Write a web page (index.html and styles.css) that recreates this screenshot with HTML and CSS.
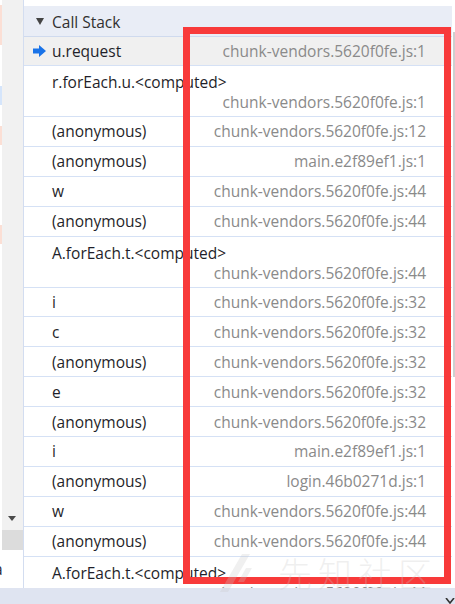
FILE: index.html
```html
<!DOCTYPE html>
<html>
<head>
<meta charset="utf-8">
<link rel="stylesheet" href="styles.css">
</head>
<body>
<div class="screen">
  <div class="main">
    <div class="edge">
      <span class="mark pink m1"></span>
      <span class="mark blue m2"></span>
      <span class="mark pink m3"></span>
      <span class="mark pink m4"></span>
    </div>
    <div class="sidebar">
      <div class="side-fill"><span class="side-arrow"></span></div>
      <div class="side-block"></div>
      <div class="side-white"><span class="cut">a</span></div>
    </div>
    <div class="panel">
      <div class="panel-top"></div>
      <div class="header"><span class="tri"></span><span class="title">Call Stack</span></div>
      <div class="row selected">
        <span class="fn"><svg class="cur" width="13" height="12" viewBox="0 0 13 12"><path d="M0 3.5h6V0l7 6-7 6V8.5H0z" fill="#1a73e8"/></svg>u.request</span>
        <span class="file">chunk-vendors.5620f0fe.js:1</span>
      </div>
      <div class="row two">
        <span class="fn">r.forEach.u.&lt;computed&gt;</span>
        <span class="file">chunk-vendors.5620f0fe.js:1</span>
      </div>
      <div class="row"><span class="fn">(anonymous)</span><span class="file">chunk-vendors.5620f0fe.js:12</span></div>
      <div class="row"><span class="fn">(anonymous)</span><span class="file">main.e2f89ef1.js:1</span></div>
      <div class="row"><span class="fn">w</span><span class="file">chunk-vendors.5620f0fe.js:44</span></div>
      <div class="row"><span class="fn">(anonymous)</span><span class="file">chunk-vendors.5620f0fe.js:44</span></div>
      <div class="row two">
        <span class="fn">A.forEach.t.&lt;computed&gt;</span>
        <span class="file">chunk-vendors.5620f0fe.js:44</span>
      </div>
      <div class="row"><span class="fn">i</span><span class="file">chunk-vendors.5620f0fe.js:32</span></div>
      <div class="row"><span class="fn">c</span><span class="file">chunk-vendors.5620f0fe.js:32</span></div>
      <div class="row"><span class="fn">(anonymous)</span><span class="file">chunk-vendors.5620f0fe.js:32</span></div>
      <div class="row"><span class="fn">e</span><span class="file">chunk-vendors.5620f0fe.js:32</span></div>
      <div class="row"><span class="fn">(anonymous)</span><span class="file">chunk-vendors.5620f0fe.js:32</span></div>
      <div class="row"><span class="fn">i</span><span class="file">main.e2f89ef1.js:1</span></div>
      <div class="row"><span class="fn">(anonymous)</span><span class="file">login.46b0271d.js:1</span></div>
      <div class="row"><span class="fn">w</span><span class="file">chunk-vendors.5620f0fe.js:44</span></div>
      <div class="row"><span class="fn">(anonymous)</span><span class="file">chunk-vendors.5620f0fe.js:44</span></div>
      <div class="row two">
        <span class="fn">A.forEach.t.&lt;computed&gt;</span>
        <span class="file">chunk-vendors.5620f0fe.js:44</span>
      </div>
    </div>
    <div class="scrollbar"><div class="thumb"></div></div>
  </div>
  <div class="bottombar">
    <svg class="chev" width="12" height="6" viewBox="0 0 12 6"><path d="M2 0l4 5 4-5" stroke="#333" stroke-width="1.6" fill="none"/></svg>
  </div>
  <div class="highlight"></div>
  <div class="watermark">
    <svg width="40" height="38" viewBox="0 0 40 38"><path d="M22 0h8L8 38H0z M26 14h6l-8 14h-6z" fill="currentColor"/></svg>
    <span class="wm-text">先知社区</span>
  </div>
</div>
</body>
</html>
```
FILE: styles.css
```css
html, body {
  margin: 0;
  padding: 0;
  background: #ffffff;
}
.screen {
  position: relative;
  width: 455px;
  height: 604px;
  overflow: hidden;
  font-family: "Open Sans", "Noto Sans", sans-serif;
  font-size: 15.5px;
}
.main {
  display: flex;
  height: 588px;
}
.edge {
  width: 2px;
  display: flex;
  flex-direction: column;
  background: #ffffff;
}
.mark { display: block; height: 19px; }
.pink { background: #fbdfd5; }
.blue { background: #d5e5fb; }
.m1 { margin-top: 5px; height: 40px; }
.m2 { margin-top: 41px; }
.m3 { margin-top: 21px; }
.m4 { margin-top: 80px; }
.sidebar {
  width: 21px;
  border-right: 1px solid #d3ddf0;
  display: flex;
  flex-direction: column;
}
.side-fill {
  flex: 1;
  background: #f1f1f1;
  display: flex;
  align-items: flex-end;
  padding-left: 6px;
  padding-bottom: 9px;
}
.side-arrow {
  width: 0;
  height: 0;
  border-left: 4.5px solid transparent;
  border-right: 4.5px solid transparent;
  border-top: 5px solid #4a4a4a;
}
.side-block {
  height: 20px;
  background: #dcdcdc;
}
.side-white {
  height: 38px;
  background: #ffffff;
  display: flex;
  align-items: center;
  overflow: visible;
}
.cut {
  margin-left: -8px;
  color: #2a2a3a;
  line-height: 20px;
}
.panel {
  flex: 1;
  display: flex;
  flex-direction: column;
  overflow: hidden;
  min-width: 0;
}
.panel-top { height: 6px; flex: none; }
.header {
  flex: none;
  height: 30px;
  border-bottom: 1px solid #cfdaee;
  background: #e9edf6;
  display: flex;
  align-items: center;
  padding-left: 12px;
  padding-top: 1px;
  box-sizing: border-box;
  height: 31px;
  color: #303030;
}
.tri {
  width: 0;
  height: 0;
  border-left: 4.5px solid transparent;
  border-right: 4.5px solid transparent;
  border-top: 7px solid #444;
  margin-right: 8px;
}
.row {
  flex: none;
  height: 28.9px;
  border-bottom: 1px solid #d5e1f5;
  display: flex;
  align-items: center;
  justify-content: space-between;
  padding: 0 26px 0 28px;
  line-height: 20px;
  white-space: nowrap;
}
.row.selected {
  height: 28px;
  background: #f0f0f0;
}
.row.two {
  flex-direction: column;
  align-items: stretch;
  justify-content: flex-start;
  padding-top: 6px;
  box-sizing: border-box;
  height: 51px;
}
.row.two .file { text-align: right; }
.fn {
  color: #1f1f2a;
  display: flex;
  align-items: center;
}
.cur {
  margin-left: -19px;
  margin-right: 6px;
}
.file {
  color: #8a8a8a;
}
.scrollbar {
  width: 3px;
  background: #ffffff;
}
.thumb {
  margin-top: 32px;
  margin-left: 1px;
  width: 2px;
  height: 345px;
  background: #cfcfcf;
}
.bottombar {
  height: 16px;
  background: #dfe4f1;
  display: flex;
  justify-content: flex-end;
  align-items: flex-end;
}
.chev { margin-right: -1px; }
.highlight {
  position: absolute;
  left: 183px;
  top: 27px;
  width: 254px;
  height: 543px;
  border: 7px solid #f83a3a;
}
.watermark {
  position: absolute;
  left: 220px;
  top: 548px;
  display: flex;
  align-items: center;
  gap: 18px;
  color: rgba(200, 200, 200, 0.28);
  pointer-events: none;
}
.wm-text {
  font-family: "Noto Sans CJK SC", sans-serif;
  font-size: 34px;
  letter-spacing: 6px;
  font-weight: 300;
}
```
